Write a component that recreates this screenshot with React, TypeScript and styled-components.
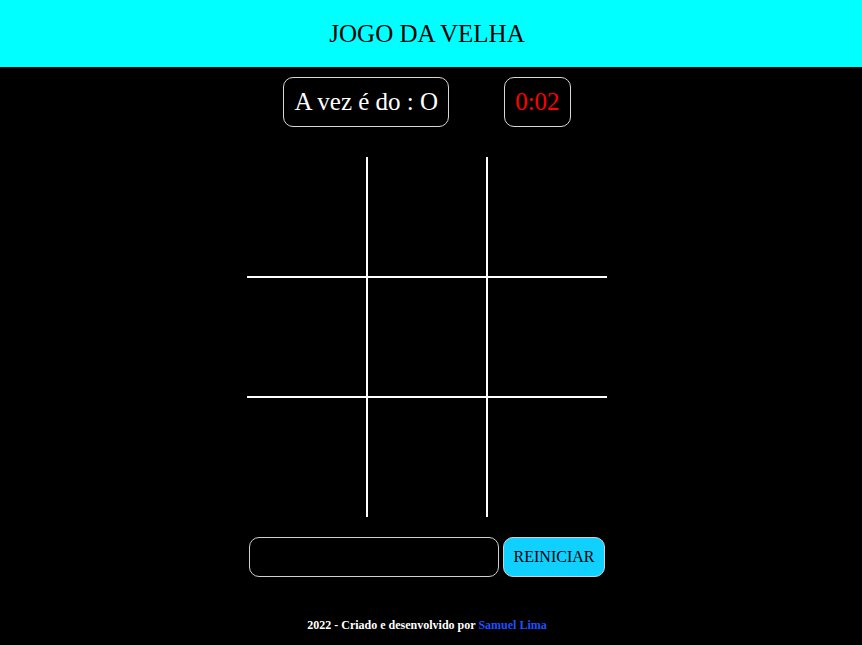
import React from "react";
import styled, { createGlobalStyle } from "styled-components";

const Global = createGlobalStyle`
  html, body { margin: 0; padding: 0; background: #000; }
  body { font-family: "Liberation Serif", "Times New Roman", serif; }
`;

const Page = styled.div`
  min-height: 645px;
  background: #000;
  display: flex;
  flex-direction: column;
  font-family: "Liberation Serif", "Times New Roman", serif;
`;

const Header = styled.header`
  height: 67px;
  background: #00ffff;
  display: flex;
  align-items: center;
  justify-content: center;
  padding-right: 8px;
`;

const Title = styled.h1`
  margin: 0;
  font-family: "Liberation Serif", "Times New Roman", serif;
  font-weight: normal;
  font-size: 25px;
  color: #000;
`;

const Main = styled.main`
  display: flex;
  flex-direction: column;
  align-items: center;
  padding-right: 8px;
`;

const InfoRow = styled.div`
  margin-top: 10px;
  display: flex;
  gap: 55px;
`;

const InfoBox = styled.div<{ $color: string }>`
  border: 1px solid #d8d8d8;
  border-radius: 10px;
  padding: 10px;
  font-family: "Liberation Serif", "Times New Roman", serif;
  font-size: 25px;
  line-height: 28px;
  color: ${(p) => p.$color};
`;

const Board = styled.div`
  margin-top: 30px;
  display: grid;
  grid-template-columns: repeat(3, 120px);
  grid-template-rows: repeat(3, 120px);
`;

const Cell = styled.div<{ $row: number; $col: number }>`
  box-sizing: border-box;
  border-color: #fff;
  border-style: solid;
  border-width: ${(p) =>
    `${p.$row > 0 ? 1 : 0}px ${p.$col < 2 ? 1 : 0}px ${p.$row < 2 ? 1 : 0}px ${p.$col > 0 ? 1 : 0}px`};
`;

const Controls = styled.div`
  margin-top: 20px;
  display: flex;
  gap: 4px;
`;

const NameBox = styled.div`
  box-sizing: border-box;
  width: 250px;
  height: 40px;
  border: 1px solid #d0d0d0;
  border-radius: 10px;
  background: #000;
`;

const Restart = styled.button`
  box-sizing: border-box;
  width: 102px;
  height: 40px;
  border: 1px solid #d0d0d0;
  border-radius: 10px;
  background: #10d0ff;
  color: #000;
  font-family: "Liberation Serif", "Times New Roman", serif;
  font-size: 16px;
  padding: 0;
`;

const Footer = styled.footer`
  margin-top: 41px;
  text-align: center;
  font-family: "Liberation Serif", "Times New Roman", serif;
  font-size: 12px;
  font-weight: bold;
  color: #fff;
  padding-right: 8px;
`;

const Link = styled.span`
  color: #1e50ff;
`;

export default function App() {
  const cells = [];
  for (let r = 0; r < 3; r++)
    for (let c = 0; c < 3; c++) cells.push(<Cell key={`${r}-${c}`} $row={r} $col={c} />);
  return (
    <>
      <Global />
      <Page>
        <Header>
          <Title>JOGO DA VELHA</Title>
        </Header>
        <Main>
          <InfoRow>
            <InfoBox $color="#fff">A vez é do : O</InfoBox>
            <InfoBox $color="#ff0000">0:02</InfoBox>
          </InfoRow>
          <Board>{cells}</Board>
          <Controls>
            <NameBox />
            <Restart>REINICIAR</Restart>
          </Controls>
        </Main>
        <Footer>
          2022 - Criado e desenvolvido por <Link>Samuel Lima</Link>
        </Footer>
      </Page>
    </>
  );
}
